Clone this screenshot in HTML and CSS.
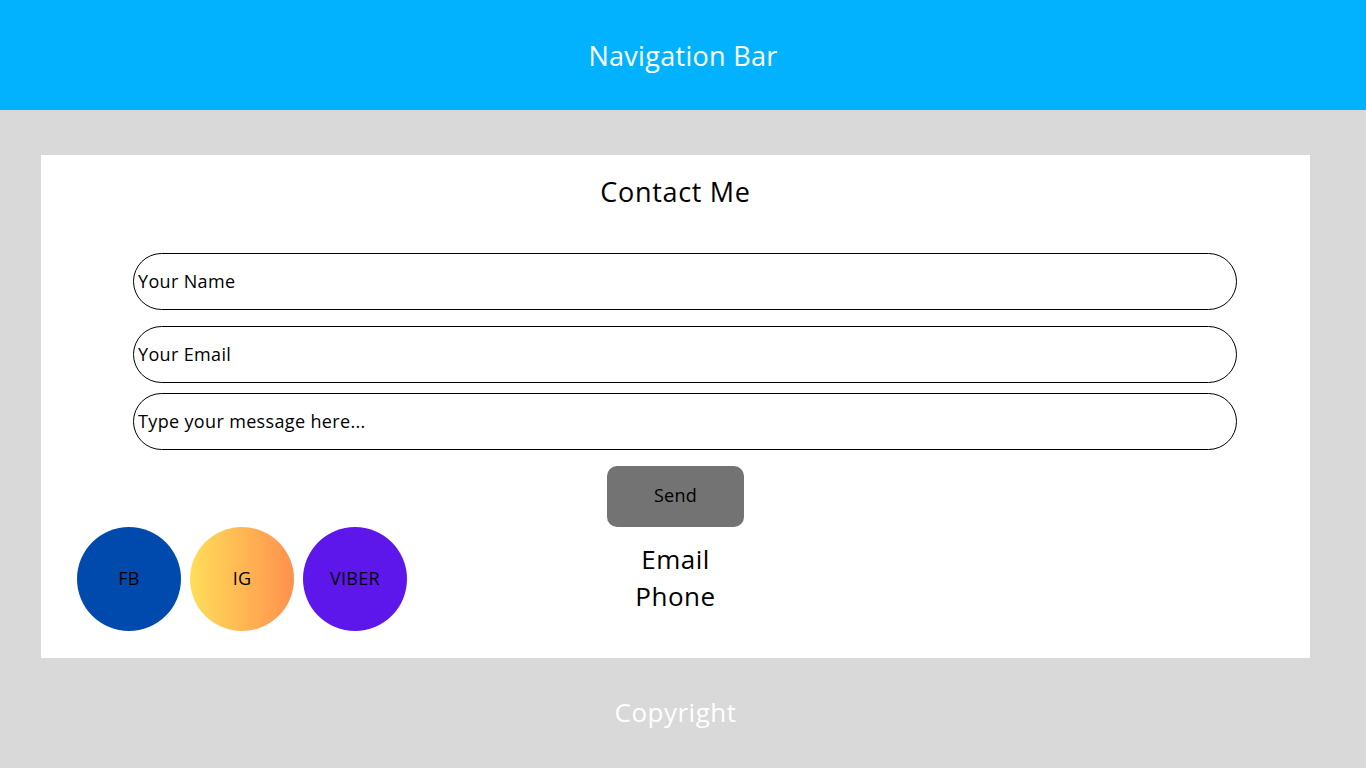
FILE: index.html
```html
<!DOCTYPE html>
<html lang="en">
<head>
<meta charset="utf-8">
<title>Contact Me</title>
<link rel="stylesheet" href="styles.css">
</head>
<body>
<header class="nav">Navigation Bar</header>
<main class="page">
  <section class="card">
    <h1 class="title">Contact Me</h1>
    <form class="form">
      <input class="field f-name" type="text" placeholder="Your Name">
      <input class="field f-email" type="email" placeholder="Your Email">
      <input class="field f-msg" type="text" placeholder="Type your message here...">
      <button class="send" type="button">Send</button>
    </form>
    <div class="bottom">
      <div class="socials">
        <a class="circle fb">FB</a>
        <a class="circle ig">IG</a>
        <a class="circle viber">VIBER</a>
      </div>
      <div class="info">
        <div>Email</div>
        <div>Phone</div>
      </div>
      <div class="spacer"></div>
    </div>
  </section>
</main>
<footer class="footer">Copyright</footer>
</body>
</html>
```
FILE: styles.css
```css
* { box-sizing: border-box; }
html, body { margin: 0; padding: 0; }
body {
  background: #d9d9d9;
  font-family: "Open Sans", "Liberation Sans", sans-serif;
  color: #000;
  height: 768px;
  overflow: hidden;
}
.nav {
  height: 110px;
  background: #03b2ff;
  color: #fff;
  font-size: 27px;
  letter-spacing: 0.3px;
  display: flex;
  align-items: center;
  justify-content: center;
}
.page {
  padding: 45px 56px 0 41px;
}
.card {
  background: #fff;
  height: 503px;
  padding: 19px 0 0;
}
.title {
  margin: 0;
  font-weight: 400;
  font-size: 27px;
  letter-spacing: 0.7px;
  line-height: 36px;
  text-align: center;
}
.form {
  display: flex;
  flex-direction: column;
  align-items: center;
  margin-top: 43px;
}
.field {
  width: 1104px;
  height: 57px;
  border: 1px solid #000;
  border-radius: 29px;
  padding: 0 0 0 4px;
  font-family: inherit;
  font-size: 18px;
  letter-spacing: 0.35px;
  color: #000;
  background: #fff;
  outline: none;
  align-self: flex-start;
  margin-left: 92px;
}
.field::placeholder { color: #000; opacity: 1; }
.f-name { padding-bottom: 1px; }
.f-email { margin-top: 16px; padding-bottom: 1px; }
.f-msg { margin-top: 10px; padding-bottom: 1px; }
.send {
  margin-top: 16px;
  width: 137px;
  height: 61px;
  border: none;
  border-radius: 10px;
  background: #737373;
  color: #000;
  font-family: inherit;
  font-size: 18px;
  letter-spacing: 0.3px;
  padding: 0 0 3px;
}
.bottom {
  display: grid;
  grid-template-columns: 1fr auto 1fr;
  padding: 0 36px;
}
.socials {
  display: flex;
  gap: 9px;
}
.circle {
  width: 104px;
  height: 104px;
  border-radius: 50%;
  display: flex;
  align-items: center;
  justify-content: center;
  font-size: 18px;
  letter-spacing: 0.3px;
  color: #000;
  padding-bottom: 2px;
}
.fb { background: #004aad; }
.ig { background: linear-gradient(90deg, #ffde59, #ff914d); }
.viber { background: #5e17eb; }
.info {
  padding-top: 14px;
  text-align: center;
  font-size: 26px;
  letter-spacing: 0.5px;
  line-height: 37px;
}
.footer {
  height: 110px;
  display: flex;
  align-items: center;
  justify-content: center;
  color: #fff;
  font-size: 26px;
  letter-spacing: 0.5px;
  padding: 0 56px 2px 41px;
}
```
